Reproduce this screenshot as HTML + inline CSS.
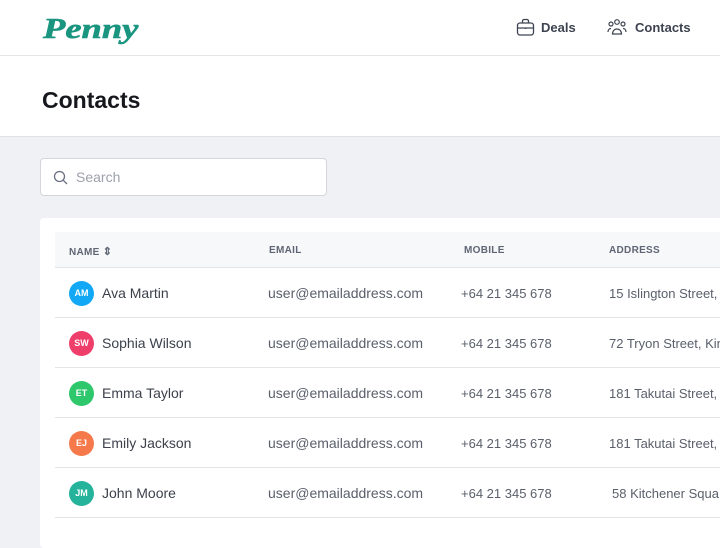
<!DOCTYPE html>
<html><head><style>
*{margin:0;padding:0;box-sizing:border-box}
body{width:720px;height:529px;overflow:hidden;background:#f0f1f5;font-family:"Liberation Sans",sans-serif;position:relative}
.top{position:absolute;left:0;top:0;width:720px;height:56px;background:#fff;border-bottom:1px solid #e3e4e8}
.logo{position:absolute;left:43px;top:13px;font-family:"Liberation Serif",serif;font-weight:bold;font-style:italic;font-size:29px;color:#1a9580;transform:scaleX(1.26);transform-origin:left top;-webkit-text-stroke:0.6px #1a9580}
.nav{position:absolute;top:20px;font-size:13px;color:#3d4350;font-weight:bold}
.hdr{position:absolute;left:0;top:56px;width:720px;height:81px;background:#fff;border-bottom:1px solid #e0e1e6}
.hdr h1{position:absolute;left:42px;top:31px;font-size:23px;font-weight:bold;color:#16181d}
.search{position:absolute;left:40px;top:158px;width:287px;height:38px;background:#fff;border:1px solid #d4d6dc;border-radius:4px}
.search span{position:absolute;left:35px;top:10px;font-size:14px;color:#9da1ab}
.card{position:absolute;left:40px;top:218px;width:700px;height:330px;background:#fff;border-radius:4px}
.th{position:absolute;left:15px;top:14px;width:700px;height:36px;background:#f7f8fa;border-bottom:1px solid #e3e4e8}
.th div{position:absolute;top:13px;font-size:10px;font-weight:bold;color:#5f6573;letter-spacing:.3px}
.row{position:absolute;left:15px;width:700px;height:50px;border-bottom:1.5px solid #e3e4e8;font-size:14px;color:#5a5f6b}
.row div{position:absolute;top:17px;white-space:nowrap}
.row .m,.row .a{font-size:13px;top:18px}
.av{position:absolute;left:14px;top:13px;width:25px;height:25px;border-radius:50%;color:#fff;font-size:9px;text-align:center;line-height:25px;font-weight:bold}
.row .nm{left:47px;color:#3c414c}
</style></head><body>
<div class="top">
<div class="logo">Penny</div>
<svg style="position:absolute;left:516px;top:18px" width="19" height="19" viewBox="0 0 19 19" fill="none" stroke="#3d4350" stroke-width="1.3"><rect x="1.5" y="5" width="16" height="12" rx="2.5"/><path d="M6.5 5V3a1.5 1.5 0 0 1 1.5-1.5h3A1.5 1.5 0 0 1 12.5 3v2M1.5 10h16M9.5 9.5v1.5"/></svg>
<div class="nav" style="left:541px">Deals</div>
<svg style="position:absolute;left:607px;top:18px" width="20" height="19" viewBox="0 0 20 19" fill="none" stroke="#3d4350" stroke-width="1.2"><circle cx="10" cy="4" r="2.3"/><circle cx="4" cy="6" r="2"/><circle cx="16" cy="6" r="2"/><path d="M5.5 16c0-3 2-5 4.5-5s4.5 2 4.5 5zM1 14c0-2 1.2-3.5 3-3.5M19 14c0-2-1.2-3.5-3-3.5"/></svg>
<div class="nav" style="left:635px">Contacts</div>
</div>
<div class="hdr"><h1>Contacts</h1></div>
<div class="search"><svg style="position:absolute;left:12px;top:11px" width="15" height="15" viewBox="0 0 15 15" fill="none" stroke="#6b7080" stroke-width="1.3"><circle cx="6.5" cy="6.5" r="5"/><path d="M10.2 10.2L14 14"/></svg><span>Search</span></div>
<div class="card">
<div class="th"><div style="left:14px">NAME <span style="font-size:11px">&#8661;</span></div><div style="left:214px">EMAIL</div><div style="left:409px">MOBILE</div><div style="left:554px">ADDRESS</div></div>
<div class="row" style="top:50px"><span class="av" style="background:#12a8f5">AM</span><div class="nm">Ava Martin</div><div style="left:213px">user@emailaddress.com</div><div class="m" style="left:406px">+64 21 345 678</div><div class="a" style="left:554px">15 Islington Street,</div></div>
<div class="row" style="top:100px"><span class="av" style="background:#ef3e6a">SW</span><div class="nm">Sophia Wilson</div><div style="left:213px">user@emailaddress.com</div><div class="m" style="left:406px">+64 21 345 678</div><div class="a" style="left:554px">72 Tryon Street, Kin</div></div>
<div class="row" style="top:150px"><span class="av" style="background:#2ec76b">ET</span><div class="nm">Emma Taylor</div><div style="left:213px">user@emailaddress.com</div><div class="m" style="left:406px">+64 21 345 678</div><div class="a" style="left:554px">181 Takutai Street,</div></div>
<div class="row" style="top:200px"><span class="av" style="background:#f5794b">EJ</span><div class="nm">Emily Jackson</div><div style="left:213px">user@emailaddress.com</div><div class="m" style="left:406px">+64 21 345 678</div><div class="a" style="left:554px">181 Takutai Street,</div></div>
<div class="row" style="top:250px"><span class="av" style="background:#26b39c">JM</span><div class="nm">John Moore</div><div style="left:213px">user@emailaddress.com</div><div class="m" style="left:406px">+64 21 345 678</div><div class="a" style="left:557px">58 Kitchener Squa</div></div>
</div>
</body></html>
